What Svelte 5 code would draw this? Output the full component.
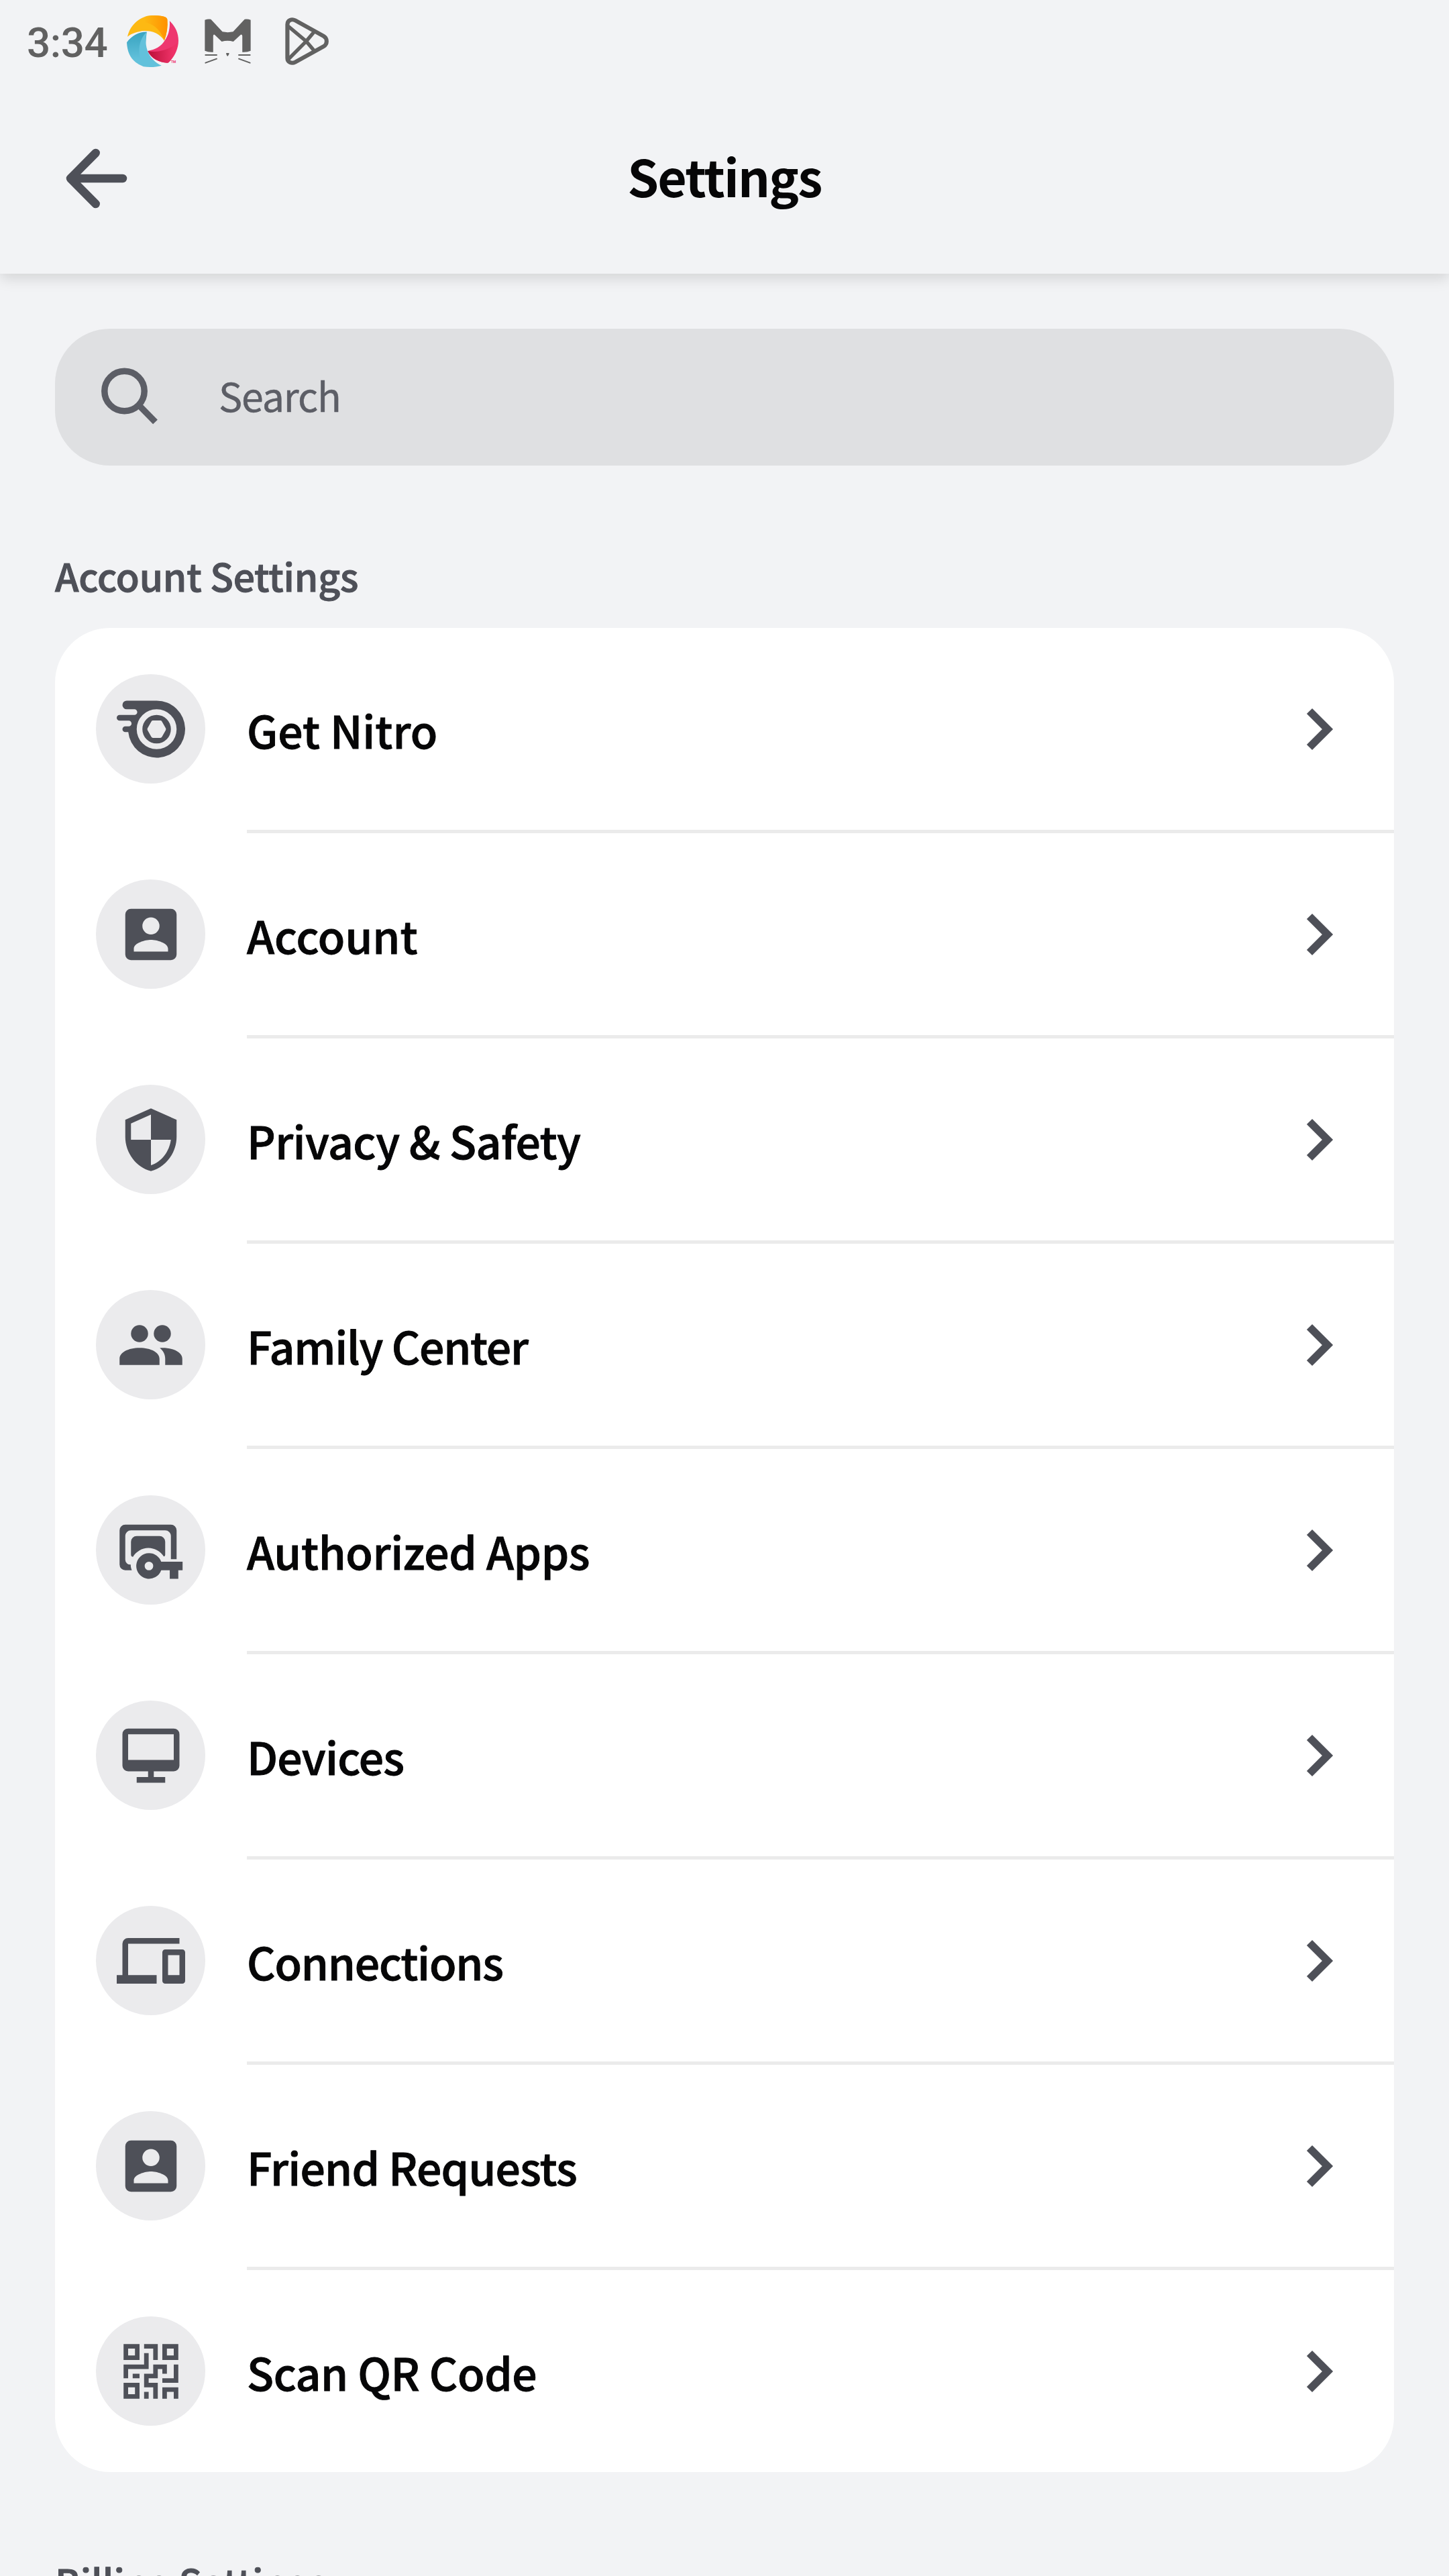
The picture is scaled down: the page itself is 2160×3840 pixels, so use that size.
<script>
  // Icon paths use a 24-unit grid unless a viewBox is given.
  const badge =
    'M3 5v14a2 2 0 0 0 2 2h14a2 2 0 0 0 2-2V5a2 2 0 0 0-2-2H5a2 2 0 0 0-2 2zm12 4a3 3 0 1 1-6 0 3 3 0 0 1 6 0zm-9 8c0-2 4-3.1 6-3.1s6 1.1 6 3.1v1H6v-1z';

  const rows = [
    {
      label: 'Get Nitro',
      tracking: 0,
      path: 'M14 2A10 10 0 1 1 4.05 13H3a1 1 0 0 1 0-2h1.2a1 1 0 0 0 0-2H1a1 1 0 0 1 0-2h5.2a1 1 0 0 0 0-2H3.5a1.5 1.5 0 0 1 0-3zM14 5a7 7 0 1 0 0 14 7 7 0 0 0 0-14zM14 7a5 5 0 1 1 0 10 5 5 0 0 1 0-10zM12.7 8.95q-.35 0-.55.35L10.85 11.6q-.22.4 0 .8L12.15 14.7q.2.35.55.35h2.6q.35 0 .55-.35L17.15 12.4q.22-.4 0-.8L15.85 9.3q-.2-.35-.55-.35z'
    },
    { label: 'Account', tracking: 0, path: badge },
    {
      label: 'Privacy & Safety',
      tracking: -0.59,
      path: 'M12 1L3 5v6c0 5.55 3.84 10.74 9 12 5.16-1.26 9-6.45 9-12V5zM12 3.19V12H5V6.3zM12 12h7c-.53 4.12-3.28 7.79-7 8.93z'
    },
    {
      label: 'Family Center',
      tracking: -1.25,
      path: 'M8 5a3 3 0 1 1 0 6 3 3 0 0 1 0-6zM16 5a3 3 0 1 1 0 6 3 3 0 0 1 0-6zM1 19v-2.2C1 14.6 4 13 8 13s7 1.6 7 3.8V19zM17 19v-2.2c0-1.6-.7-2.8-1.9-3.75.3-.03.6-.05.9-.05 4 0 7 1.6 7 3.8V19z'
    },
    {
      label: 'Authorized Apps',
      tracking: -0.35,
      path: 'M3 3h16a2 2 0 0 1 2 2v10.1h-2V7a2 2 0 0 0-2-2H5a2 2 0 0 0-2 2v8.3A1.7 1.7 0 0 0 4.9 17c0 .7.1 1.3.4 2H3a2 2 0 0 1-2-2V5a2 2 0 0 1 2-2zM7 7h8a2 2 0 0 1 2 2v4.6q0 .5-.5.6A6.3 6.3 0 0 0 5.7 14.3Q5 14.3 5 13.4V9a2 2 0 0 1 2-2zM11.3 13a4.5 4.5 0 0 1 4.3 3h7.5v3h-1.5v3h-3v-3h-3a4.5 4.5 0 1 1-4.3-6zM11.3 16a1.5 1.5 0 1 0 0 3 1.5 1.5 0 0 0 0-3z'
    },
    {
      label: 'Devices',
      tracking: -0.82,
      path: 'M4 2.5a2 2 0 0 0-2 2v11a2 2 0 0 0 2 2h7v2H7v2h10v-2h-4v-2h7a2 2 0 0 0 2-2v-11a2 2 0 0 0-2-2zM20 4.5v9H4v-9z'
    },
    {
      label: 'Connections',
      tracking: -1.2,
      path: 'M4 6h18V4H4a2 2 0 0 0-2 2v11H0v3h14v-3H4zM23 8h-6a1 1 0 0 0-1 1v10a1 1 0 0 0 1 1h6a1 1 0 0 0 1-1V9a1 1 0 0 0-1-1zM22 17h-4v-7h4z'
    },
    { label: 'Friend Requests', tracking: -0.8, path: badge },
    {
      label: 'Scan QR Code',
      tracking: -0.45,
      viewBox: '-1.5 -1.5 15 15',
      path: 'M0 0h3.5v3.5H0zM1 1v1.5h1.5V1zM8.5 0H12v3.5H8.5zM9.5 1v1.5H11V1zM0 8.5h3.5V12H0zM1 9.5V11h1.5V9.5zM4.5 0h3v3.5h-1V1h-2zM4.5 2h1v3.5H1v2H0v-3h4.5zM2 6.5h1.5v1H2zM6.5 4.5h3v2h-1v-1h-1v2h-2v1h2V12h-1V9.5h-2v-3h2zM11 4.5h1v4H8.5v-1H11zM8.5 9.5H12V12h-1v-1.5H9.5V12h-1zM4.5 10.5h1V12h-1z'
    }
  ];
</script>

<main class="screen">
  <header class="top">
    <div class="status">
      <span class="time">3:34</span>
      <svg class="swirl" viewBox="0 0 223 230" preserveAspectRatio="none">
        <defs>
          <linearGradient id="orange" x1="0" x2="1"><stop offset=".2" stop-color="#fdb913" /><stop offset="1" stop-color="#ff9100" /></linearGradient>
          <linearGradient id="red" x1="0" x2="1"><stop offset="0" stop-color="#ba0f38" /><stop offset=".85" stop-color="#ee3268" /></linearGradient>
          <linearGradient id="teal" x1="0" x2="0" y1="0" y2="1"><stop offset="0" stop-color="#38a3c0" /><stop offset=".8" stop-color="#62c1db" /></linearGradient>
        </defs>
        <path fill="#fdb913" d="M3 95C14 40 62 0 110 0c25-1 45 2 58 8q5 3 7 10 4 48-13 94C140 80 110 68 75 69 50 71 20 80 3 95z" />
        <path fill="url(#orange)" d="M50 28C72 8 92 1 110 0c25-1 45 2 58 8q5 3 7 10 4 48-13 94C145 62 110 28 50 28z" />
        <path fill="#ee366f" d="M185 25c24 22 38 52 38 87 0 38-18 74-43 98q-3 2-7 1C140 207 105 195 90 158c32-5 60-20 75-48 15-23 22-50 20-85z" />
        <path fill="url(#red)" d="M90 158c45 10 92-5 130-36-3 34-19 67-40 88q-3 2-7 1C140 209 108 192 90 158z" />
        <path fill="url(#teal)" d="M86 73C55 72 22 88 0 120c2 40 14 68 38 88q12 10 34 20z" />
        <path fill="#62c1db" d="M86 73c-35 35-44 95-14 155 25 4 55 3 78-5C95 197 72 140 86 73z" />
        <text x="191" y="213" font-size="14" fill="#ee366f">TM</text>
      </svg>
      <svg class="cat" viewBox="0 0 200 201" preserveAspectRatio="none">
        <path fill="#616161" d="M1 5q13-5 26-3l50 56q23 5 46 0l50-56q14-2 26 3v138q-14 7-36 6V78q0-10-7-7l-32 31q-25-7-50 0L43 71q-6-3-6 7v71q-22 1-36-6zM93 153h13l-1 7-5 7h-2l-4-7z" />
        <path fill="none" stroke="#616161" stroke-width="6" stroke-linecap="round" d="M4 162h48M148 162h48M4 197l48-18M148 179l48 18" />
      </svg>
      <svg class="play" viewBox="0 0 190 214" preserveAspectRatio="none">
        <path fill="none" stroke="#616161" stroke-width="18" stroke-linejoin="round" d="M10 32C10 12 29 5 44 13l124 71c17 10 17 36 0 46L44 201c-15 8-34 1-34-19z" />
        <path fill="none" stroke="#616161" stroke-width="16" d="M14 40l78 67 36 44M14 188l78-81 36-44" />
      </svg>
    </div>
    <div class="toolbar">
      <svg class="back" viewBox="0 0 102 102"><path d="M50.7 13L13 51l37.7 38M15 51h76" /></svg>
      <h1>Settings</h1>
    </div>
  </header>

  <div class="search">
    <svg viewBox="0 0 102 102"><circle cx="43.5" cy="42" r="29.7" /><path d="M64 62l25.500 26" /></svg>
    <span>Search</span>
  </div>

  <h2>Account Settings</h2>
  <section class="card">
    {#each rows as row}
      <div class="row">
        <span class="bubble">
          <svg viewBox={row.viewBox ?? '0 0 24 24'}><path fill-rule="evenodd" d={row.path} /></svg>
        </span>
        <div class="body">
          <span class="label" style="letter-spacing: {row.tracking}px">{row.label}</span>
          <svg class="chevron" viewBox="0 0 40 64"><path d="M5 5l27 27L5 59" /></svg>
        </div>
      </div>
    {/each}
  </section>

  <h2 class="next">Billing Settings</h2>
</main>

<style>
  :global(body) { background: #f2f3f5; }

  .screen {
    width: 2160px;
    height: 3840px;
    overflow: hidden;
    background: #f2f3f5;
    color: #060607;
    font-family: "Noto Sans CJK SC", "Noto Sans", sans-serif;
    display: flex;
    flex-direction: column;
  }
  svg { display: block; flex: none; overflow: visible; }
  h1, h2 { margin: 0; white-space: nowrap; }

  .top {
    flex: none;
    height: 408px;
    background: #f2f3f5;
    box-shadow: 0 7px 20px rgba(0, 0, 0, 0.13);
  }
  .status {
    height: 123px;
    padding-left: 40px;
    display: flex;
    align-items: center;
    box-sizing: border-box;
  }
  .time {
    width: 149px;
    padding-top: 5px;
    font: 500 62px/72px Roboto, sans-serif;
    letter-spacing: -0.4px;
    color: #616161;
  }
  .swirl { width: 77px; height: 77px; font-family: Roboto, sans-serif; font-weight: 700; }
  .cat { width: 69px; height: 67px; margin-left: 39px; }
  .play { width: 65px; height: 71px; margin-left: 51px; }

  .toolbar {
    height: 285px;
    padding: 0 92px;
    display: grid;
    grid-template-columns: 1fr auto 1fr;
    align-items: center;
  }
  .back { width: 102px; height: 102px; }
  .back path {
    fill: none;
    stroke: #4e5058;
    stroke-width: 12.5;
    stroke-linecap: round;
    stroke-linejoin: round;
  }
  h1 {
    font-size: 75px;
    line-height: 90px;
    font-weight: 700;
    letter-spacing: -1.8px;
    padding-bottom: 8px;
  }

  .search {
    flex: none;
    height: 204px;
    margin: 82px 82px 0;
    padding-left: 60px;
    box-sizing: border-box;
    border-radius: 82px;
    background: #dfe0e2;
    display: flex;
    align-items: center;
    color: #5c5e66;
  }
  .search svg { width: 102px; height: 102px; fill: none; stroke: #5c5e66; stroke-width: 9.5; }
  .search span {
    margin-left: 82px;
    padding-bottom: 6px;
    font-size: 59px;
    line-height: 80px;
    letter-spacing: -1.1px;
    -webkit-text-stroke: 0.5px currentColor;
  }

  h2 {
    flex: none;
    height: 80px;
    margin: 123px 82px 39px;
    font-size: 57px;
    line-height: 80px;
    font-weight: 500;
    letter-spacing: -0.2px;
    color: #4e5058;
    -webkit-text-stroke: 1px currentColor;
  }

  .card {
    flex: none;
    margin: 0 82px;
    border-radius: 82px;
    background: #fff;
    overflow: hidden;
  }
  .row { display: flex; align-items: flex-start; padding-left: 61px; }
  .bubble {
    flex: none;
    width: 163px;
    height: 163px;
    margin: 69px 62px 69px 0;
    border-radius: 50%;
    background: #ebebed;
    display: grid;
    place-items: center;
  }
  .bubble svg { width: 102px; height: 102px; fill: #4e5058; }
  .body {
    flex: 1;
    height: 301px;
    display: flex;
    align-items: center;
    justify-content: space-between;
    border-bottom: 5px solid #ebebeb;
    padding-right: 91px;
  }
  .row:last-child .body { border-bottom: 0; }
  .label {
    font-size: 66px;
    line-height: 90px;
    font-weight: 500;
    white-space: pre;
    -webkit-text-stroke: 0.9px currentColor;
  }
  .chevron { width: 40px; height: 64px; }
  .chevron path { fill: none; stroke: #4e5058; stroke-width: 11.5; }

  .next { margin: 122px 82px 0; }
</style>
